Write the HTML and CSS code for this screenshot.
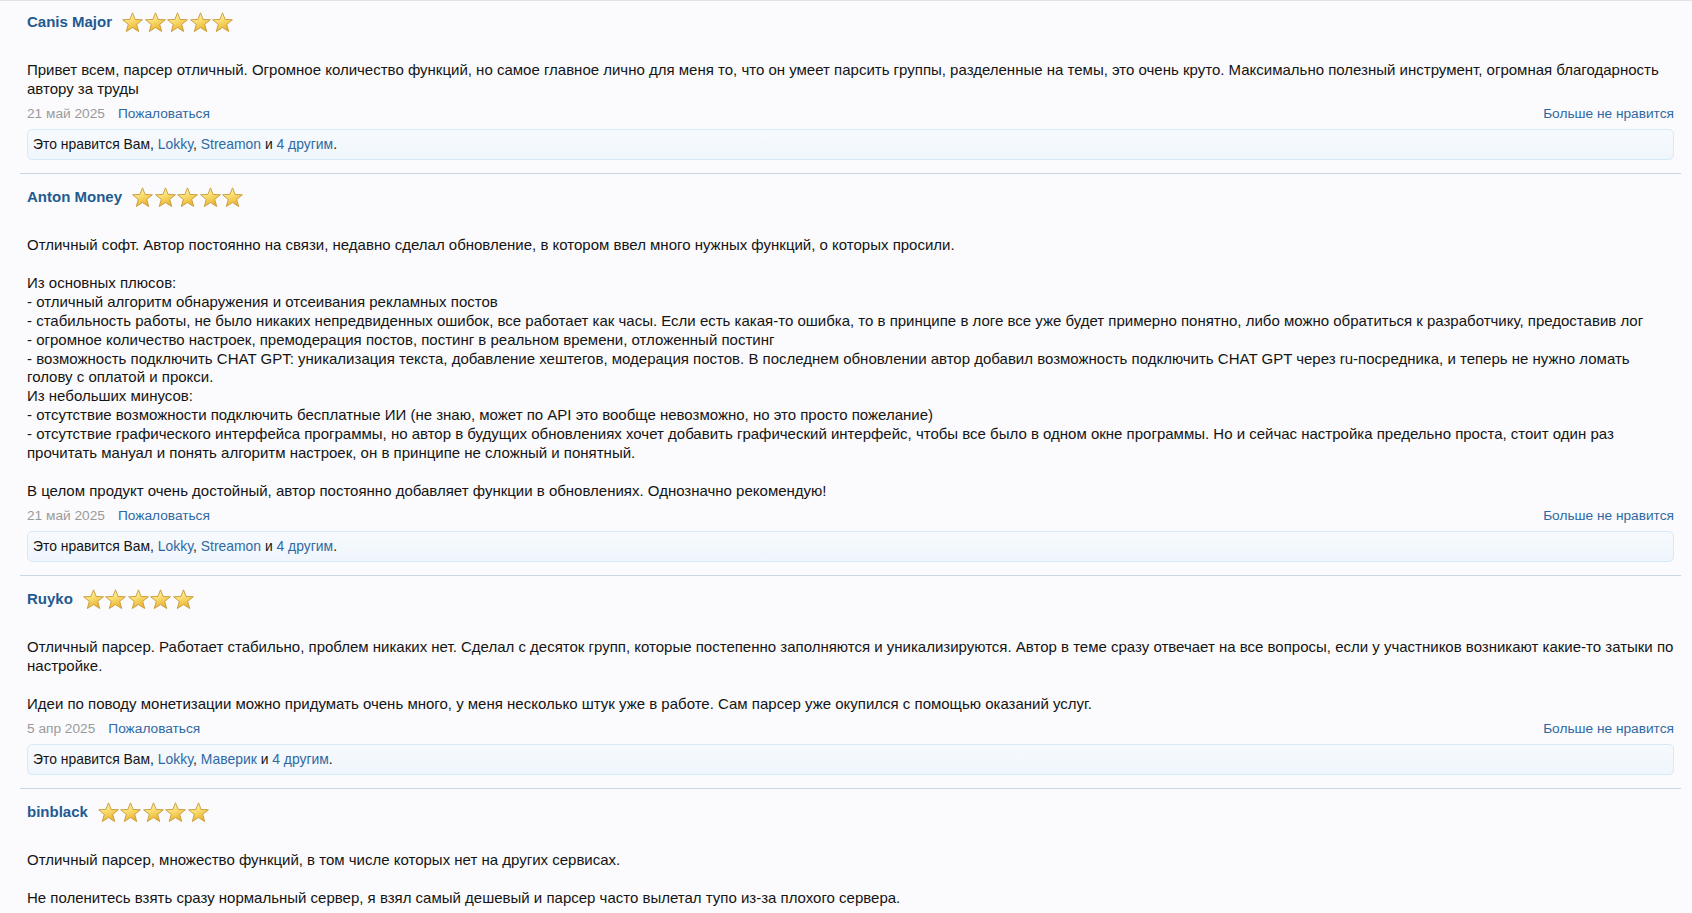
FILE: index.html
```html
<!DOCTYPE html>
<html lang="ru">
<head>
  <meta charset="UTF-8">
  <meta name="viewport" content="width=device-width, initial-scale=1.0">
  <title>Отзывы</title>
  <link rel="stylesheet" href="styles.css">
</head>
<body>

  <svg class="svg-defs" width="0" height="0" aria-hidden="true">
    <defs>
      <linearGradient id="star-fill" x1="0" y1="0" x2="0.4" y2="1">
        <stop offset="0%" stop-color="#fffbd8"/>
        <stop offset="45%" stop-color="#fbe27a"/>
        <stop offset="100%" stop-color="#eab530"/>
      </linearGradient>
      <symbol id="star" viewBox="0 0 20 20">
        <polygon points="10,0.8 12.5,7.1 19.4,7.4 14,11.8 15.9,18.6 10,14.8 4.1,18.6 6,11.8 0.6,7.4 7.5,7.1"
                 fill="url(#star-fill)" stroke="#c99a3a" stroke-width="0.9" stroke-linejoin="round"/>
      </symbol>
    </defs>
  </svg>

  <div class="reviews">

    <!-- отзыв 1 -->
    <div class="review">
      <div class="review-head">
        <a href="#" class="username">Canis Major</a>
        <span class="rating">
          <svg class="star"><use href="#star"/></svg>
          <svg class="star"><use href="#star"/></svg>
          <svg class="star"><use href="#star"/></svg>
          <svg class="star"><use href="#star"/></svg>
          <svg class="star"><use href="#star"/></svg>
        </span>
      </div>
      <div class="review-text">Привет всем, парсер отличный. Огромное количество функций, но самое главное лично для меня то, что он умеет парсить группы, разделенные на темы, это очень круто. Максимально полезный инструмент, огромная благодарность автору за труды</div>
      <div class="review-meta">
        <div class="meta-left">
          <span class="date">21 май 2025</span>
          <a href="#" class="link">Пожаловаться</a>
        </div>
        <a href="#" class="link">Больше не нравится</a>
      </div>
      <div class="likes">Это нравится Вам, <a href="#" class="link">Lokky</a>, <a href="#" class="link">Streamon</a> и <a href="#" class="link">4 другим</a>.</div>
    </div>

    <!-- отзыв 2 -->
    <div class="review">
      <div class="review-head">
        <a href="#" class="username">Anton Money</a>
        <span class="rating">
          <svg class="star"><use href="#star"/></svg>
          <svg class="star"><use href="#star"/></svg>
          <svg class="star"><use href="#star"/></svg>
          <svg class="star"><use href="#star"/></svg>
          <svg class="star"><use href="#star"/></svg>
        </span>
      </div>
      <div class="review-text">Отличный софт. Автор постоянно на связи, недавно сделал обновление, в котором ввел много нужных функций, о которых просили.<br>
<br>
Из основных плюсов:<br>
- отличный алгоритм обнаружения и отсеивания рекламных постов<br>
- стабильность работы, не было никаких непредвиденных ошибок, все работает как часы. Если есть какая-то ошибка, то в принципе в логе все уже будет примерно понятно, либо можно обратиться к разработчику, предоставив лог<br>
- огромное количество настроек, премодерация постов, постинг в реальном времени, отложенный постинг<br>
- возможность подключить CHAT GPT: уникализация текста, добавление хештегов, модерация постов. В последнем обновлении автор добавил возможность подключить CHAT GPT через ru-посредника, и теперь не нужно ломать голову с оплатой и прокси.<br>
Из небольших минусов:<br>
- отсутствие возможности подключить бесплатные ИИ (не знаю, может по API это вообще невозможно, но это просто пожелание)<br>
- отсутствие графического интерфейса программы, но автор в будущих обновлениях хочет добавить графический интерфейс, чтобы все было в одном окне программы. Но и сейчас настройка предельно проста, стоит один раз прочитать мануал и понять алгоритм настроек, он в принципе не сложный и понятный.<br>
<br>
В целом продукт очень достойный, автор постоянно добавляет функции в обновлениях. Однозначно рекомендую!</div>
      <div class="review-meta">
        <div class="meta-left">
          <span class="date">21 май 2025</span>
          <a href="#" class="link">Пожаловаться</a>
        </div>
        <a href="#" class="link">Больше не нравится</a>
      </div>
      <div class="likes">Это нравится Вам, <a href="#" class="link">Lokky</a>, <a href="#" class="link">Streamon</a> и <a href="#" class="link">4 другим</a>.</div>
    </div>

    <!-- отзыв 3 -->
    <div class="review">
      <div class="review-head">
        <a href="#" class="username">Ruyko</a>
        <span class="rating">
          <svg class="star"><use href="#star"/></svg>
          <svg class="star"><use href="#star"/></svg>
          <svg class="star"><use href="#star"/></svg>
          <svg class="star"><use href="#star"/></svg>
          <svg class="star"><use href="#star"/></svg>
        </span>
      </div>
      <div class="review-text">Отличный парсер. Работает стабильно, проблем никаких нет. Сделал с десяток групп, которые постепенно заполняются и уникализируются. Автор в теме сразу отвечает на все вопросы, если у участников возникают какие-то затыки по настройке.<br>
<br>
Идеи по поводу монетизации можно придумать очень много, у меня несколько штук уже в работе. Сам парсер уже окупился с помощью оказаний услуг.</div>
      <div class="review-meta">
        <div class="meta-left">
          <span class="date">5 апр 2025</span>
          <a href="#" class="link">Пожаловаться</a>
        </div>
        <a href="#" class="link">Больше не нравится</a>
      </div>
      <div class="likes">Это нравится Вам, <a href="#" class="link">Lokky</a>, <a href="#" class="link">Маверик</a> и <a href="#" class="link">4 другим</a>.</div>
    </div>

    <!-- отзыв 4 -->
    <div class="review">
      <div class="review-head">
        <a href="#" class="username">binblack</a>
        <span class="rating">
          <svg class="star"><use href="#star"/></svg>
          <svg class="star"><use href="#star"/></svg>
          <svg class="star"><use href="#star"/></svg>
          <svg class="star"><use href="#star"/></svg>
          <svg class="star"><use href="#star"/></svg>
        </span>
      </div>
      <div class="review-text">Отличный парсер, множество функций, в том числе которых нет на других сервисах.<br>
<br>
Не поленитесь взять сразу нормальный сервер, я взял самый дешевый и парсер часто вылетал тупо из-за плохого сервера.</div>
    </div>

  </div>

</body>
</html>
```

FILE: styles.css
```css
:root {
  --page-bg: #fbfbfd;
  --text: #141414;
  --name: #1f5a90;
  --link: #2f69a3;
  --muted: #9a9a9a;
  --separator: #c9d7e4;
  --likes-border: #d6e9f8;
}

body {
  margin: 0;
  padding: 0;
  background-color: var(--page-bg);
  color: var(--text);
  font-family: 'Liberation Sans', Arial, sans-serif;
  font-size: 15px;
  line-height: 18.95px;
  border-top: 1px solid #e2e2e4;
  overflow: hidden;
}

.svg-defs {
  position: absolute;
  width: 0;
  height: 0;
}

a {
  text-decoration: none;
}

.reviews {
  padding: 0 11px 0 20px;
}

.review {
  padding: 13px 7px 13px 7px;
  border-bottom: 1px solid var(--separator);
}

.review:first-child {
  padding-top: 11px;
}

.review-head {
  display: flex;
  align-items: center;
  gap: 10px;
}

.username {
  font-size: 15px;
  font-weight: 700;
  color: var(--name);
}

.rating {
  display: flex;
  align-items: center;
  gap: 1.5px;
}

.star {
  width: 21px;
  height: 21px;
  display: block;
}

.review-text {
  margin-top: 28px;
}

.review-meta {
  display: flex;
  justify-content: space-between;
  align-items: center;
  margin-top: 6px;
  font-size: 13.7px;
}

.meta-left {
  display: flex;
  gap: 13px;
}

.date {
  color: var(--muted);
}

.link {
  color: var(--link);
}

.likes {
  margin-top: 5px;
  padding: 5px 5px;
  border: 1px solid var(--likes-border);
  border-radius: 5px;
  background: linear-gradient(180deg, #f7fafd 0%, #eff6fc 100%);
  font-size: 13.9px;
}
```
